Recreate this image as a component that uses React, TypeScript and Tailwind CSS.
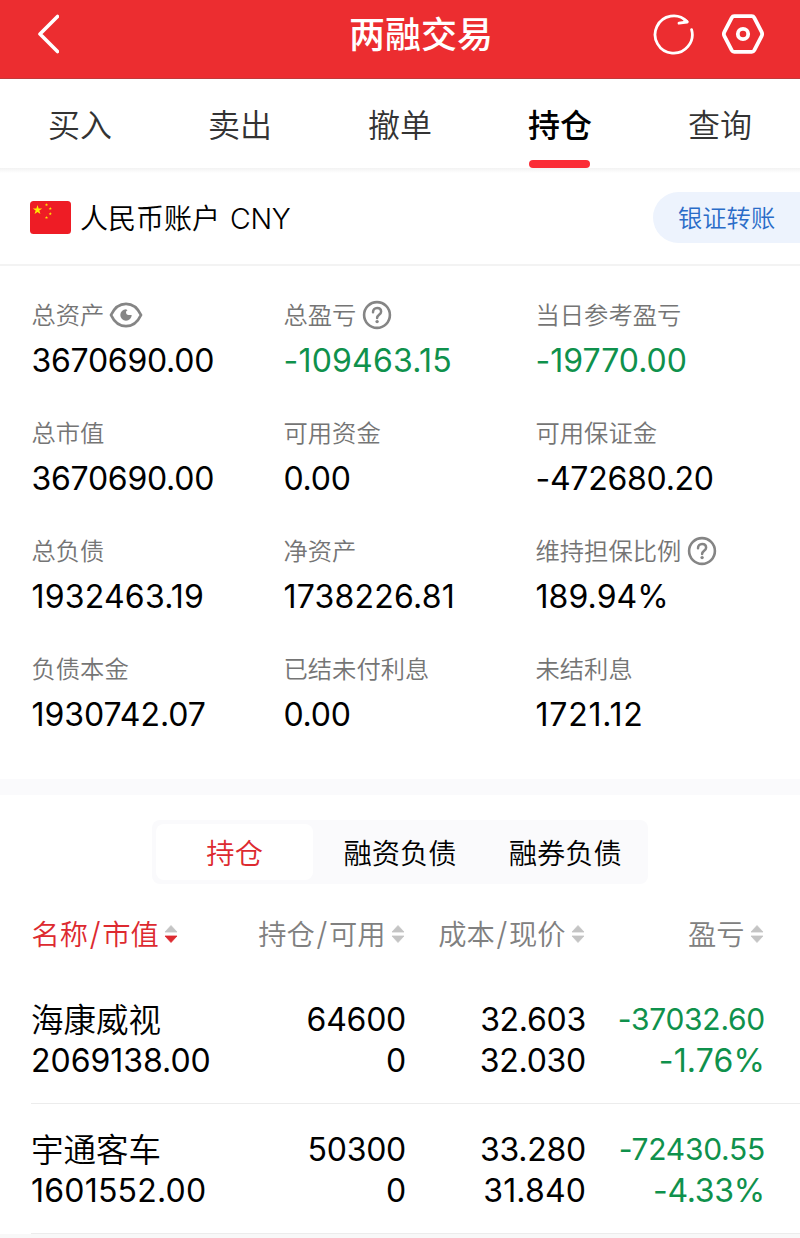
import React, { useState } from "react";
import clsx from "clsx";

interface Metric {
  label: string;
  value: string;
  icon?: "eye" | "help";
  down?: boolean;
}

interface Holding {
  name: string;
  marketValue: string;
  amount: string;
  available: string;
  cost: string;
  price: string;
  profit: string;
  ratio: string;
}

const tabs = ["买入", "卖出", "撤单", "持仓", "查询"];

const segments = ["持仓", "融资负债", "融券负债"];

const metrics: Metric[] = [
  { label: "总资产", value: "3670690.00", icon: "eye" },
  { label: "总盈亏", value: "-109463.15", icon: "help", down: true },
  { label: "当日参考盈亏", value: "-19770.00", down: true },
  { label: "总市值", value: "3670690.00" },
  { label: "可用资金", value: "0.00" },
  { label: "可用保证金", value: "-472680.20" },
  { label: "总负债", value: "1932463.19" },
  { label: "净资产", value: "1738226.81" },
  { label: "维持担保比例", value: "189.94%", icon: "help" },
  { label: "负债本金", value: "1930742.07" },
  { label: "已结未付利息", value: "0.00" },
  { label: "未结利息", value: "1721.12" },
];

const holdings: Holding[] = [
  {
    name: "海康威视",
    marketValue: "2069138.00",
    amount: "64600",
    available: "0",
    cost: "32.603",
    price: "32.030",
    profit: "-37032.60",
    ratio: "-1.76%",
  },
  {
    name: "宇通客车",
    marketValue: "1601552.00",
    amount: "50300",
    available: "0",
    cost: "33.280",
    price: "31.840",
    profit: "-72430.55",
    ratio: "-4.33%",
  },
];

const BackIcon = () => (
  <svg width="24" height="42" viewBox="0 0 24 42" fill="none" stroke="#fff" strokeWidth="3.6" strokeLinecap="round" strokeLinejoin="round">
    <path d="M22.5 3.5 5 21l17.5 17.5" />
  </svg>
);

const RefreshIcon = () => (
  <svg width="42" height="42" viewBox="0 0 42 42" fill="none" stroke="#fff" strokeWidth="2.8" strokeLinecap="round" strokeLinejoin="round">
    <path d="M39.6 16.6A18.6 18.6 0 1 1 35 8.600" />
    <path d="M32 6.300 35.200 9 27 10.200" />
  </svg>
);

const SettingIcon = () => (
  <svg width="44" height="42" viewBox="0 0 44 42" fill="none" stroke="#fff" strokeWidth="3.8" strokeLinejoin="round">
    <path d="M13.2 3.2h17.6q1.6 0 2.4 1.4l7.4 14.2q1.1 2.2 0 4.4l-7.4 14.2q-.8 1.4-2.4 1.4H13.2q-1.6 0-2.4-1.4L3.4 23.2q-1.1-2.2 0-4.400L10.800 4.600q.8-1.400 2.400-1.400z" />
    <circle cx="22" cy="21" r="5.2" />
  </svg>
);

const EyeIcon = () => (
  <svg className="-ml-px" width="34" height="28" viewBox="0 0 34 28" fill="none">
    <path d="M2 14C5.5 6.5 10.5 2.8 17 2.8S28.5 6.5 32 14c-3.5 7.5-8.5 11.2-15 11.200S5.500 21.500 2 14z" stroke="#858585" strokeWidth="2.8" strokeLinejoin="round" />
    <path d="M17 8.300a5.700 5.700 0 1 0 5.700 5.700h-3.200a2.500 2.500 0 0 1-1-4.800z" fill="#858585" />
  </svg>
);

const HelpIcon = () => (
  <svg width="30" height="30" viewBox="0 0 30 30" fill="none" stroke="#858585" strokeLinecap="round">
    <circle cx="15" cy="15" r="12.9" strokeWidth="2.6" />
    <path d="M11 12.2c0-2.500 1.700-4.200 4.100-4.200s4 1.600 4 3.700c0 3-4 3.200-4 6.200" strokeWidth="2.5" />
    <circle cx="15.1" cy="21.6" r="1.7" fill="#858585" stroke="none" />
  </svg>
);

const SortIcon = ({ active = false }: { active?: boolean }) => (
  <svg className="mb-[2px]" width="14" height="20" viewBox="0 0 14 20">
    <path d="M7 1.5 13 8H1z" fill="#c4c4c4" stroke="#c4c4c4" strokeWidth=".8" strokeLinejoin="round" />
    <path d="M1 12h12l-6 6.500z" fill={active ? "#dd2a30" : "#c4c4c4"} stroke={active ? "#dd2a30" : "#c4c4c4"} strokeWidth=".8" strokeLinejoin="round" />
  </svg>
);

const star = "M0-1 .225-.309.951-.309.363.118.588.809 0 .382-.588.809-.363.118-.951-.309-.225-.309z";

const FlagIcon = () => (
  <svg width="41" height="33" viewBox="0 0 41 33">
    <rect width="41" height="33" rx="3.5" fill="#ee1c25" />
    <g fill="#ffea00">
      <path d={star} transform="translate(7.5 9) scale(5)" />
      <path d={star} transform="translate(16.5 3.8) scale(1.7)" />
      <path d={star} transform="translate(20.3 7.6) scale(1.7)" />
      <path d={star} transform="translate(20.3 12.8) scale(1.7)" />
      <path d={star} transform="translate(16.5 16.6) scale(1.7)" />
    </g>
  </svg>
);

// the narrow "1" makes some amounts look cramped, so even them out
const Num = ({ value, className }: { value: string; className?: string }) => {
  const ones = value.split("1").length - 1;
  return (
    <p className={className} style={{ letterSpacing: `${(2.4 * ones) / value.length - 0.27}px` }}>
      {value}
    </p>
  );
};

const HeadCell = ({ title, sub, active }: { title: string; sub?: string; active?: boolean }) => (
  <div className={clsx("flex items-center gap-[5px]", active ? "text-[#dd2a30]" : "justify-end text-[#808080]")}>
    <span className="pt-px">
      {title}
      {sub && <span className="mx-[1.5px] text-[32px] leading-none">/</span>}
      {sub}
    </span>
    <SortIcon active={active} />
  </div>
);

function App() {
  const [tab, setTab] = useState(3);
  const [segment, setSegment] = useState(0);

  return (
    <div className="flex h-[1238px] w-[800px] flex-col overflow-hidden bg-white font-['Inter','Noto_Sans_CJK_SC',sans-serif] font-[350] text-black">
      <header className="flex h-[79px] shrink-0 items-center border-b border-[#c23a3a] bg-[#ec2d30] pr-[35px] pb-[10px] pl-[35px]">
        <button className="w-6">
          <BackIcon />
        </button>
        <h1 className="ml-[290px] pt-[2px] text-[36px] leading-none font-medium text-white">两融交易</h1>
        <div className="ml-auto flex items-center gap-[27px]">
          <RefreshIcon />
          <SettingIcon />
        </div>
      </header>

      <nav className="grid h-[89px] shrink-0 grid-cols-5">
        {tabs.map((item, index) => (
          <button
            key={item}
            onClick={() => setTab(index)}
            className={clsx(
              "flex flex-col items-center justify-between pt-[27px] text-[32px] leading-10",
              tab === index ? "font-medium text-black" : "text-[#333]"
            )}
          >
            {item}
            {tab === index && <span className="mr-px h-2 w-[61px] rounded-full bg-[#fb2c36]" />}
          </button>
        ))}
      </nav>

      <section className="flex h-[98px] shrink-0 items-center border-b-2 border-b-[#f3f3f3] bg-linear-to-b from-[#f2f2f2] to-white to-[5px] pt-[3px] pl-[30px]">
        <FlagIcon />
        <span className="ml-[9px] pt-[2px] text-[28px] leading-10">
          人民币账户<span className="ml-[10px] text-[28.5px] tracking-[-0.3px]">CNY</span>
        </span>
        <button className="ml-auto h-[51px] w-[147px] rounded-l-full bg-[#edf3fd] pt-px pl-[25px] text-left text-[24.3px] text-[#2a6cc8]">
          银证转账
        </button>
      </section>

      <section className="grid h-[513px] shrink-0 auto-rows-[118px] grid-cols-[252px_252px_1fr] pt-[30px] pl-[31.5px]">
        {metrics.map((item) => (
          <div key={item.label}>
            <div className="flex h-[38px] items-center gap-[6px] text-[24.3px] text-[#757575]">
              <span>{item.label}</span>
              {item.icon === "eye" && <EyeIcon />}
              {item.icon === "help" && <HelpIcon />}
            </div>
            <Num value={item.value} className={clsx("mt-[7px] text-[32px] leading-10 font-normal", item.down && "text-[#0f914c]")} />
          </div>
        ))}
      </section>

      <div className="h-4 shrink-0 bg-[#fafafc]" />

      <div className="mx-auto mt-[25px] grid h-16 w-[496px] shrink-0 grid-cols-3 rounded-lg bg-[#fafafc] py-1">
        {segments.map((item, index) => (
          <button
            key={item}
            onClick={() => setSegment(index)}
            className={clsx("mx-1 rounded-lg pt-[5px] text-[28.3px]", segment === index ? "bg-white text-[#dd2a30]" : "text-black")}
          >
            {item}
          </button>
        ))}
      </div>

      <div className="grid h-[90px] shrink-0 grid-cols-[178px_195px_180px_179px] items-center pt-[11px] pl-[31.5px] text-[28.3px]">
        <HeadCell title="名称" sub="市值" active />
        <HeadCell title="持仓" sub="可用" />
        <HeadCell title="成本" sub="现价" />
        <HeadCell title="盈亏" />
      </div>

      <div className="flex-1 bg-[#f8f8f8]">
        {holdings.map((row) => (
          <div key={row.name} className="bg-white pl-[31px]">
            <div className="grid h-[130px] grid-cols-[178px_197px_180px_179px] border-b border-[#ececec] pt-[25px] text-right text-[32px] leading-[41px] font-normal">
              <div className="text-left">
                <p className="h-[41px] pt-px text-[32.5px] font-[350]">{row.name}</p>
                <Num value={row.marketValue} />
              </div>
              <div>
                <Num value={row.amount} />
                <Num value={row.available} />
              </div>
              <div>
                <Num value={row.cost} />
                <Num value={row.price} />
              </div>
              <div className="text-[#0f914c]">
                <Num value={row.profit} className="text-[30px]" />
                <Num value={row.ratio} />
              </div>
            </div>
          </div>
        ))}
      </div>
    </div>
  );
}

export default App;
